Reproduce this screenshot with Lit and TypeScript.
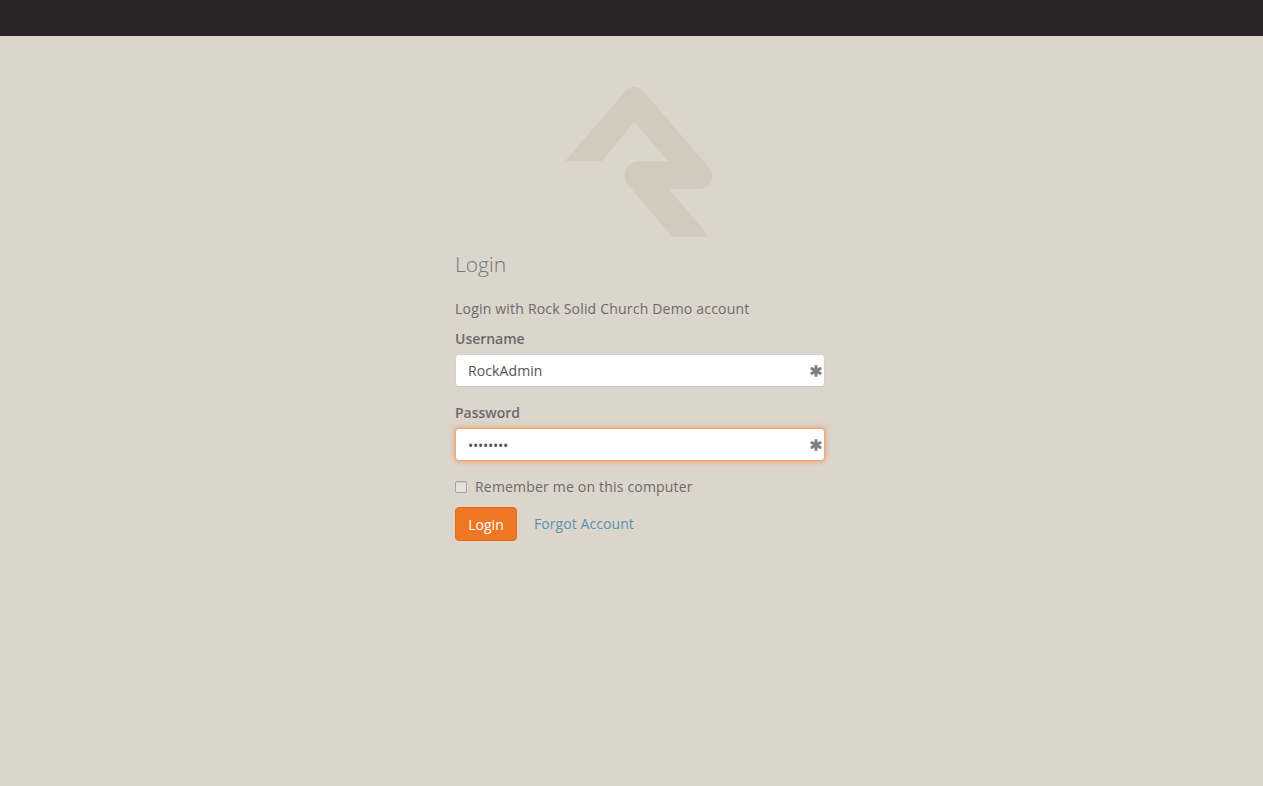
import { LitElement, html, css } from "lit";
import { customElement } from "lit/decorators.js";

const star = html`<svg class="star" viewBox="0 0 12 12" aria-hidden="true"><path d="M6 .2v11.600M.8 3l10.400 6M11.200 3L.8 9" /></svg>`;

@customElement("app-root")
export class AppRoot extends LitElement {
  static styles = css`
    :host { display: block; min-height: 786px; background: #dcd5cc; font-family: "Open Sans", sans-serif; font-size: 14px; line-height: 20px; color: #6a6a6a; }
    .top { height: 36px; background: #282526; }
    .main { width: 370px; margin-left: 455px; display: flex; flex-direction: column; }
    .logo { display: block; width: 148px; height: 151px; margin: 50px 0 0 110px; }
    .logo path { fill: #d1cabd; }
    h1 { margin: 11px 0 0; font-size: 21px; font-weight: 300; line-height: 32px; color: #6f7a80; }
    .intro { margin: 19px 0 0; line-height: 20px; letter-spacing: .2px; }
    .field { margin-top: 10px; display: flex; flex-direction: column; }
    .field + .field { margin-top: 16px; }
    label { font-weight: 600; line-height: 20px; margin-bottom: 5px; letter-spacing: -.02px; }
    .box { position: relative; display: flex; }
    input.text { width: 100%; height: 33px; box-sizing: border-box; padding: 0 12px; font: 14px "Open Sans", sans-serif; letter-spacing: .1px; color: #555; background: #fff; border: 1px solid #d4d2cf; border-bottom-color: #c8c6c3; border-radius: 4px; outline: none; }
    input.focus { border-color: #f4a46c; box-shadow: 0 0 5px rgba(242, 120, 35, .7); letter-spacing: -.25px; padding-top: 1px; }
    .star { position: absolute; right: 3px; top: 11px; width: 12px; height: 12px; }
    .star path { stroke: #808080; stroke-width: 3; fill: none; }
    .remember { display: flex; align-items: center; gap: 8px; margin-top: 16px; letter-spacing: .19px; }
    .check { width: 12px; height: 12px; box-sizing: border-box; border: 1px solid #a3a3a3; border-radius: 2px; background: #e4e2df; box-shadow: inset 0 1px 1px rgba(0, 0, 0, .1); }
    .actions { display: flex; align-items: center; gap: 17px; margin-top: 10px; }
    button { height: 34px; width: 62px; padding: 0; font: 14px "Open Sans", sans-serif; color: #fff; background: #ef7622; border: 1px solid #e36b17; border-radius: 4px; }
    a { color: #5592ad; text-decoration: none; letter-spacing: .07px; }
  `;

  render() {
    return html`
      <div class="top"></div>
      <div class="main">
        <svg class="logo" viewBox="0 0 148 151">
          <path d="M0 75.300 L58.800 7 C62.500 2.700 65.500 .7 69.300 .7 C73.100 .7 76.300 2.800 79.800 7 L143.300 80.700 C146 84 147.300 87 147.300 90 C147.300 97 141 103 133.300 103 L104 103 L144 150.700 L107.300 150.700 L63.300 99 C61 96.300 59.700 93 59.700 90 C59.700 82 66 75.300 74 75.300 L103.300 75.300 L69.300 35.700 L36.700 75.300 Z" />
        </svg>
        <h1>Login</h1>
        <p class="intro">Login with Rock Solid Church Demo account</p>
        <div class="field">
          <label for="u">Username</label>
          <div class="box"><input id="u" class="text" type="text" value="RockAdmin" />${star}</div>
        </div>
        <div class="field">
          <label for="p">Password</label>
          <div class="box"><input id="p" class="text focus" type="password" value="password" />${star}</div>
        </div>
        <div class="remember"><span class="check"></span><span>Remember me on this computer</span></div>
        <div class="actions"><button>Login</button><a href="#">Forgot Account</a></div>
      </div>
    `;
  }
}
